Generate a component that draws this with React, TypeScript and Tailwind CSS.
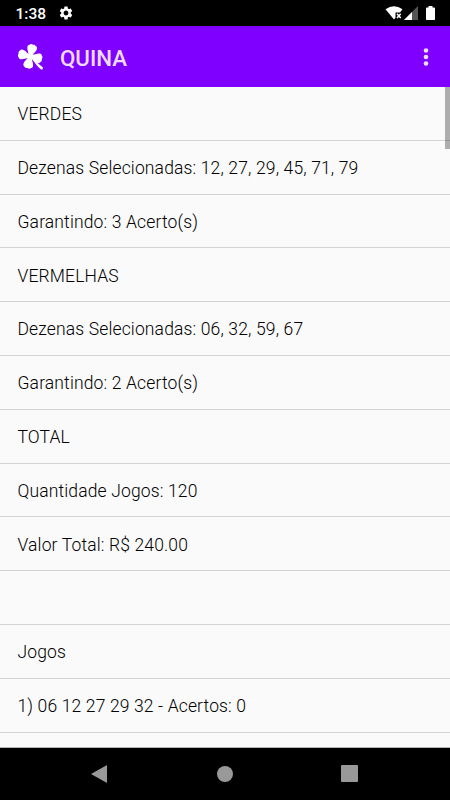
import { MdSettings } from 'react-icons/md';

const rows = [
    'VERDES',
    'Dezenas Selecionadas: 12, 27, 29, 45, 71, 79',
    'Garantindo: 3 Acerto(s)',
    'VERMELHAS',
    'Dezenas Selecionadas: 06, 32, 59, 67',
    'Garantindo: 2 Acerto(s)',
    'TOTAL',
    'Quantidade Jogos: 120',
    'Valor Total: R$ 240.00',
    '',
    'Jogos',
    '1) 06 12 27 29 32 - Acertos: 0',
    '',
];

const leaf = 'M-1.8 0C-1.9 -3.4 -4.9 -5.8 -4.9 -8.6C-4.9 -10 -4.4 -10.8 -3.4 -11.1C-2.4 -12.4 -1 -12.5 0 -11.9C1 -12.5 2.4 -12.4 3.4 -11.1C4.4 -10.8 4.9 -10 4.9 -8.6C4.9 -5.8 1.9 -3.4 1.8 0Z';

const Clover = () => (
    <svg width="28" height="28" viewBox="0 0 28 28" fill="white">
        <g transform="translate(13.2 13.4) rotate(13)">
            <path d={leaf} />
            <path d={leaf} transform="rotate(90)" />
            <path d={leaf} transform="rotate(180)" />
            <path d={leaf} transform="rotate(270)" />
        </g>
        <path d="M14.5 14.5Q20 20 26 24.4L25.4 26.4H24Q18.6 22.2 14.5 14.5Z" />
    </svg>
);

const StatusBar = () => (
    <div className="flex h-[26px] shrink-0 items-center justify-between bg-black pl-[15.5px] pr-[15px] text-white">
        <div className="flex items-center pt-0.5">
            <span className="w-[42px] text-[15.5px] font-medium leading-5">1:38</span>
            <MdSettings size={16} className="-mt-[3px]" />
        </div>
        <div className="flex items-center">
            {/* Wifi without connection */}
            <svg width="18" height="16" viewBox="0 0 18 16">
                <path d="M.5 4.3Q9 -1.7 17.5 4.3L15 7.5H10.5V12.7L9 14.5Z" fill="white" />
                <path d="M12 8.7L15.7 12.9M15.7 8.7L12 12.9" stroke="white" strokeWidth="1.5" />
            </svg>
            <svg className="ml-[1px]" width="14" height="14" viewBox="0 0 14 14">
                <path d="M0 14L14 0V14Z" fill="#555" />
                <path d="M0 14L8 6V14Z" fill="white" />
            </svg>
            <svg className="ml-[8px]" width="9" height="14" viewBox="0 0 9 14">
                <path d="M0 2.2Q0 1.5 .8 1.5H2.5V0H6.5V1.5H8.2Q9 1.5 9 2.2V13.2Q9 14 8.2 14H.8Q0 14 0 13.2Z" fill="white" />
            </svg>
        </div>
    </div>
);

const App = () => {
    return (
        <div className="flex h-[800px] w-[450px] flex-col overflow-hidden bg-[#fafafa] font-['Roboto',sans-serif]">
            <StatusBar />

            <header className="flex h-[61px] shrink-0 items-center bg-[#7f00ff] pl-[17px] pr-[21px]">
                <Clover />
                <h1 className="ml-[15px] mt-[2px] grow text-[22.3px] font-medium leading-7 text-[#eedcff]">QUINA</h1>
                <svg width="6" height="20" viewBox="0 0 6 20" fill="#eedcff">
                    <circle cx="3" cy="3.5" r="2.3" />
                    <circle cx="3" cy="10" r="2.3" />
                    <circle cx="3" cy="16.5" r="2.3" />
                </svg>
            </header>

            <main className="relative min-h-0 grow overflow-hidden border-b border-[#b5b5b5]">
                <ul>
                    {rows.map((row, index) => (
                        <li key={index} className="flex h-[53.8px] items-center border-b border-[#d3d3d3] pl-[17.5px] pt-0.5 text-[17.5px] font-[350] tracking-[0.14px] text-black">
                            {row}
                        </li>
                    ))}
                </ul>
                {/* Scrollbar */}
                <div className="absolute right-0 top-0 h-[62px] w-[5px] bg-black/30" />
            </main>

            <nav className="flex h-[52px] shrink-0 items-center bg-black pb-px pl-[91px]">
                <svg width="16" height="18" viewBox="0 0 16 18" fill="#999">
                    <path d="M0 9L16 0V18Z" />
                </svg>
                <div className="ml-[110px] h-4 w-4 rounded-full bg-[#999]" />
                <div className="ml-[108px] h-[17px] w-[17px] rounded-[1px] bg-[#999]" />
            </nav>
        </div>
    );
};

export default App;
